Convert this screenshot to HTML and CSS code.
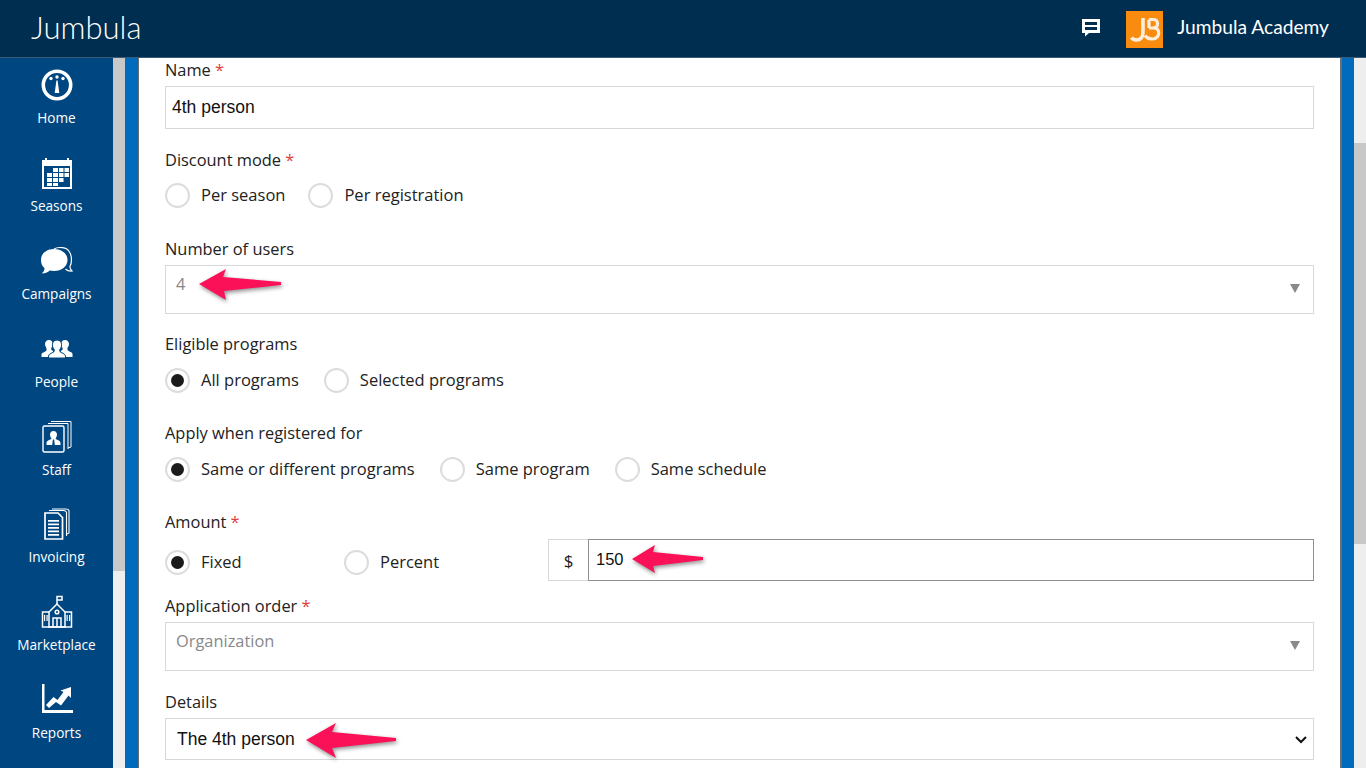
FILE: index.html
```html
<!DOCTYPE html>
<html lang="en">
<head>
<meta charset="utf-8">
<title>Jumbula</title>
<link rel="stylesheet" href="styles.css">
</head>
<body>
<header class="topbar">
  <div class="brand">Jumbula</div>
  <div class="top-right">
    <svg class="chat" width="20" height="20" viewBox="0 0 20 20"><path fill="#fff" d="M1 1h18v14H8l-4 3.500V15H1z"/><path fill="#002e50" d="M4 4h12v3H4zM4 9h12v3H4z"/></svg>
    <svg class="logo" width="37" height="37" viewBox="0 0 37 37"><rect width="37" height="37" fill="#f98b0f"/><path fill="none" stroke="#fdeedb" stroke-width="3.600" d="M17 7v14c0 6-3 8-6.500 8-2.500 0-4-1-5-2.500"/><path fill="none" stroke="#fdeedb" stroke-width="3.200" d="M23 8.500h4c3 0 4.500 1.500 4.500 4.200s-2 4.300-5 4.300H23h4.500c3.500 0 5.200 2 5.200 5s-2.500 6-6 6c-3 0-5.700-.500-7.700-3.500M23 8.500V17"/></svg>
    <span class="org">Jumbula Academy</span>
  </div>
</header>
<div class="shell">
  <nav class="side">
    <a class="nav"><svg width="34" height="34" viewBox="0 0 34 34"><circle cx="17" cy="17" r="13.700" fill="none" stroke="#fff" stroke-width="3.600"/><circle cx="17" cy="9" r="1.700" fill="#fff"/><circle cx="11" cy="10.500" r="1.700" fill="#fff"/><circle cx="23" cy="10.500" r="1.700" fill="#fff"/><path fill="#fff" d="M16.400 12.500h1.200l1.700 12.500h-4.600z"/></svg><span>Home</span></a>
    <a class="nav"><svg width="34" height="34" viewBox="0 0 34 34"><path fill="#fff" d="M2 4h3V2h2v2h20V2h2v2h3v29H2z"/><path fill="#004680" d="M4 10h26v21H4z"/><path fill="#fff" d="M13 12h5v4h-5zM19 12h4.500v4H19zM24.500 12h4.500v4h-4.500zM7 17h5v4H7zM13 17h5v4h-5zM19 17h4.500v4H19zM24.500 17h4.500v4h-4.500zM7 22h5v4H7zM13 22h5v4h-5zM19 22h4.500v4H19zM7 27h5v3H7zM13 27h5v3h-5z"/></svg><span>Seasons</span></a>
    <a class="nav nudge"><svg width="34" height="34" viewBox="0 0 34 34"><path fill="none" stroke="#fff" stroke-width="1.200" d="M14 3c4-2.500 13-2 15.500 3 2.500 4 2.500 11 .5 14.500-.3 2 .5 3 2 4.500-3 .2-5-.5-6.500-2"/><path fill="#fff" d="M14 3c7.500 0 13.500 4.500 13.500 11S21.500 25 14 25c-1.500 0-3-.2-4.200-.5-2 2-5 3-8 3 1.500-1.500 2.700-3 2.700-5.500C2 20 1 17.500 1 14 1 7.500 6.500 3 14 3z"/></svg><span>Campaigns</span></a>
    <a class="nav"><svg width="34" height="34" viewBox="0 0 34 34"><g fill="#fff"><path d="M9 8c2.500 0 3.800 1.800 3.800 4 0 1.700-.800 3-1.500 3.800V18l2 1-3 6H1.500v-2.500c0-1.800 3.800-2.500 5-4v-2.200C5.800 15 5 13.700 5 12c0-2.200 1.500-4 4-4z"/><path d="M25 8c2.500 0 4 1.800 4 4 0 1.700-.800 3-1.500 3.800V18c1.200 1.500 5 2.200 5 4v3h-9l-3-6 2-1v-2.200C21.800 15 21 13.700 21 12c0-2.200 1.500-4 4-4z"/></g><path fill="#fff" stroke="#004680" stroke-width="1" d="M17 8c3 0 4.600 2.200 4.600 4.800 0 2-1 3.600-1.800 4.600v2c1 1.500 5.700 2.300 5.700 4.600V26h-17v-2c0-2.300 4.700-3.100 5.700-4.600v-2c-.800-1-1.800-2.600-1.800-4.600C12.400 10.200 14 8 17 8z"/></svg><span>People</span></a>
    <a class="nav"><svg width="34" height="34" viewBox="0 0 34 34"><g fill="none" stroke="#fff" stroke-width="1"><path d="M11 1.500h20V27l-3 1"/><path d="M8 3.500h20V29"/></g><rect x="3" y="6" width="21" height="26" rx="1.500" fill="#004680" stroke="#fff" stroke-width="1.400"/><path fill="#fff" d="M13.500 11c2.500 0 3.500 2 3.500 3.500S16 18 15.500 19c2 1 5 1.500 5 4v2H6.500v-2c0-2.500 3-3 5-4-.5-1-1.500-3-1.500-4.500S11 11 13.500 11z"/><path fill="#004680" d="M12.900 19.500h1.200l.7 5.500h-2.600z"/></svg><span>Staff</span></a>
    <a class="nav"><svg width="34" height="34" viewBox="0 0 34 34"><g fill="none" stroke="#fff" stroke-width="1.100"><path d="M12 2h14c2 0 3 1 3 2v22l-2 1"/><path d="M9 3.500h14c2 0 3.500 1 3.500 2.500v23"/></g><path fill="#004680" stroke="#fff" stroke-width="1.700" d="M5 6h13l4.500 4.500V32H5z"/><path fill="#fff" d="M8 13h11v1.800H8zM8 16.500h11v1.800H8zM8 20h11v1.800H8zM8 23.500h11v1.800H8zM8 27h11v1.800H8z"/></svg><span>Invoicing</span></a>
    <a class="nav"><svg width="34" height="34" viewBox="0 0 34 34"><g fill="none" stroke="#fff" stroke-width="1.500"><path d="M17 9V1.500h5v3.500h-5"/><path d="M9 17l8-8 8 8v15H9z"/><path d="M9 17H2.500v15h29V17H25"/><circle cx="17" cy="17" r="1.800"/><path d="M13 32V23h8v9M17 23v9"/></g><path fill="#fff" d="M4 20h1.200v6H4zM6.500 20h1.200v6H6.500zM26.500 20h1.200v6h-1.200zM29 20h1.200v6H29z"/></svg><span>Marketplace</span></a>
    <a class="nav"><svg width="34" height="34" viewBox="0 0 34 34"><path fill="#fff" d="M2 1h2.500v26H33v3H2z"/><path fill="#fff" d="M6 22l7.500-8 4 3 6-8-3-1.500L31 4v11l-2.500-2.500-7.500 10-5-3.500-7 6z"/></svg><span>Reports</span></a>
  </nav>
  <div class="scroll-left"><div class="thumb-left"></div></div>
  <main class="stage">
    <form class="card">
      <div class="field name-field">
        <label class="lbl">Name <em>*</em></label>
        <div class="input big-text">4th person</div>
      </div>
      <div class="field radio-field gap-a">
        <label class="lbl">Discount mode <em>*</em></label>
        <div class="radios tight">
          <span class="radio"><i></i>Per season</span>
          <span class="radio"><i></i>Per registration</span>
        </div>
      </div>
      <div class="field gap-b">
        <label class="lbl">Number of users</label>
        <div class="combo"><span>4</span><b></b>
          <svg class="arrow arrow-a" width="96" height="44" viewBox="0 0 96 44"><path d="M4 21L31 6l-3 8 58 5v3l-57 6 2 9z"/></svg>
        </div>
      </div>
      <div class="field radio-field gap-c">
        <label class="lbl">Eligible programs</label>
        <div class="radios low">
          <span class="radio on"><i></i>All programs</span>
          <span class="radio"><i></i>Selected programs</span>
        </div>
      </div>
      <div class="field radio-field gap-d">
        <label class="lbl">Apply when registered for</label>
        <div class="radios low">
          <span class="radio on"><i></i>Same or different programs</span>
          <span class="radio"><i></i>Same program</span>
          <span class="radio"><i></i>Same schedule</span>
        </div>
      </div>
      <div class="field gap-e">
        <label class="lbl">Amount <em>*</em></label>
        <div class="amount">
          <span class="radio on fixed"><i></i>Fixed</span>
          <span class="radio percent"><i></i>Percent</span>
          <div class="money">
            <span class="cur">$</span>
            <div class="val">150
              <svg class="arrow arrow-b" width="96" height="44" viewBox="0 0 96 44"><path d="M4 21L27 7l-2 7 50 5v3l-50 6 2 7z"/></svg>
            </div>
          </div>
        </div>
      </div>
      <div class="field gap-f">
        <label class="lbl">Application order <em>*</em></label>
        <div class="combo"><span>Organization</span><b></b></div>
      </div>
      <div class="field gap-g">
        <label class="lbl">Details</label>
        <div class="input native">The 4th person
          <svg class="chev" width="12" height="8" viewBox="0 0 12 8"><path fill="none" stroke="#111" stroke-width="2" d="M1 1l5 5 5-5"/></svg>
          <svg class="arrow arrow-c" width="96" height="44" viewBox="0 0 96 44"><path d="M4 21L34 4l-4 9 64 6v3l-64 7 4 10z"/></svg>
        </div>
      </div>
    </form>
  </main>
  <div class="scroll-right"><div class="thumb-right"></div></div>
</div>
</body>
</html>
```
FILE: styles.css
```css
* { box-sizing: border-box; }
html, body { margin: 0; height: 768px; overflow: hidden; }
body { font-family: "Open Sans", "Noto Sans", sans-serif; color: #222; background: #fff; }
.topbar { height: 58px; background: #002e50; border-bottom: 1px solid #3a5a78; display: flex; align-items: center; justify-content: space-between; color: #fff; padding: 1px 37px 0 31px; }
.brand { font-family: Lato, sans-serif; font-weight: 300; font-size: 31px; margin-bottom: 4px; }
.top-right { display: flex; align-items: center; }
.chat { margin-right: 25px; margin-bottom: 3px; }
.logo { margin-right: 14px; }
.org { font-family: Lato, sans-serif; font-size: 19.200px; font-weight: 400; margin-bottom: 6px; }
.shell { display: flex; height: 710px; }
.side { width: 113px; background: #004680; display: flex; flex-direction: column; padding-top: 10px; }
.nav { height: 87.900px; flex: none; display: flex; flex-direction: column; align-items: center; color: #fff; font-size: 13.600px; }
.nav svg { height: 34px; flex: none; }
.nav span { margin-top: 6px; line-height: 20px; }
.nudge svg { margin-top: 2px; margin-bottom: -2px; }
.scroll-left { width: 12px; background: #eee; }
.thumb-left { height: 513px; background: #c8c8c8; }
.stage { flex: 1; background: #006bbd; padding: 0 12px 0 13px; overflow: hidden; }
.card { height: 100%; background: #fff; border-left: 1px solid #6d6d6d; border-right: 2px solid #6d6d6d; padding: 1px 26px 0 26px; }
.field { display: flex; flex-direction: column; }
.lbl { font-size: 16.400px; line-height: 22px; height: 27px; color: #222; }
.lbl em { color: #e0403a; font-style: normal; }
.input { height: 43px; border: 1px solid #d8d8d8; padding: 0 6px; display: flex; align-items: center; font-size: 16px; color: #111; font-family: "Liberation Sans", sans-serif; position: relative; }
.big-text { font-size: 17.500px; }
.native { height: 42px; padding-left: 11px; font-size: 17.500px; }
.chev { position: absolute; right: 6px; top: 17px; }
.combo { height: 49px; border: 1px solid #d8d8d8; padding: 6px 10px 0; font-size: 16.400px; line-height: 24px; color: #888; position: relative; }
.combo b { position: absolute; right: 13px; top: 18px; border: 5.500px solid transparent; border-top: 9px solid #8a8a8a; border-bottom: 0; }
.radios { display: flex; gap: 25px; height: 26px; margin-top: 6px; }
.radios.low { margin-top: 7px; }
.radios.tight { gap: 23px; }
.radio { display: flex; align-items: center; gap: 11px; font-size: 16.500px; line-height: 26px; color: #222; }
.radio i { width: 25px; height: 25px; border-radius: 50%; border: 2px solid #dcdcdc; background: #fff; display: flex; align-items: center; justify-content: center; flex: none; }
.radio.on i::after { content: ""; width: 13px; height: 13px; border-radius: 50%; background: #1b1b1b; }
.gap-a { margin-top: 20px; }
.gap-b { margin-top: 30px; }
.gap-c { margin-top: 19px; }
.gap-d { margin-top: 29px; }
.gap-e { margin-top: 29px; }
.gap-f { margin-top: 14px; }
.gap-g { margin-top: 20px; }
.amount { display: flex; align-items: center; height: 42px; margin-top: 1px; position: relative; }
.fixed { width: 179px; margin-top: 4px; }
.percent { width: 204px; margin-top: 4px; }
.money { flex: 1; display: flex; height: 42px; }
.cur { width: 40px; border: 1px solid #d8d8d8; border-right: 0; display: flex; align-items: center; justify-content: center; font-size: 17px; color: #222; }
.val { flex: 1; border: 1px solid #8f8f8f; padding: 0 7px 2px; display: flex; align-items: center; font-size: 16.500px; font-family: "Liberation Sans", sans-serif; color: #111; position: relative; }
.arrow { position: absolute; filter: drop-shadow(1px 2px 2px rgba(0,0,0,.45)); }
.arrow path { fill: #fb1158; }
.arrow-a { left: 29px; top: -3px; }
.arrow-b { left: 39px; top: -2px; }
.arrow-c { left: 136px; top: 0; }
.scroll-right { width: 12px; background: #eee; }
.thumb-right { height: 401px; margin-top: 85px; background: #c8c8c8; }
```
